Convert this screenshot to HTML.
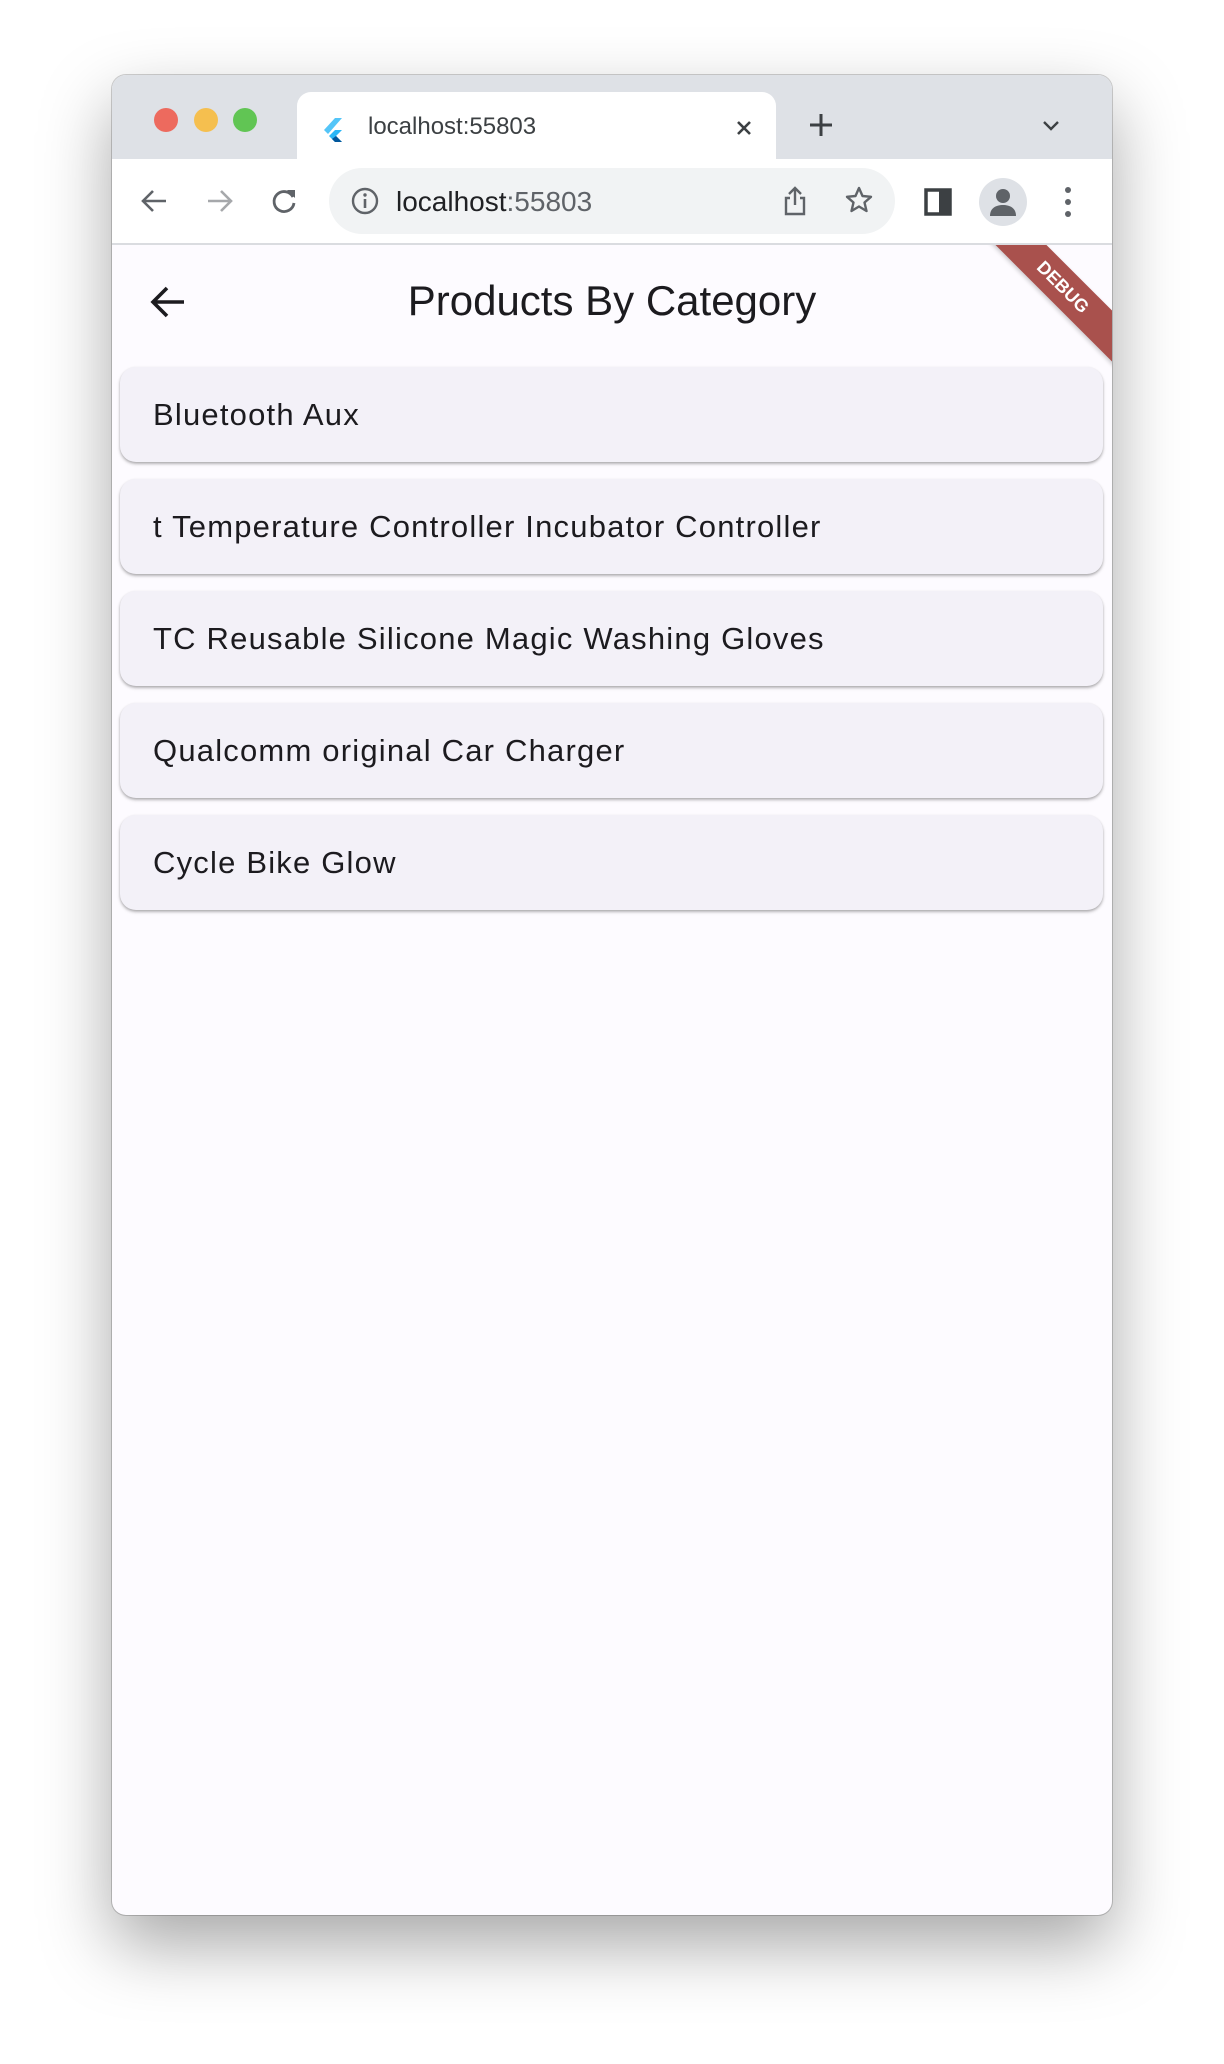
<!DOCTYPE html>
<html><head><meta charset="utf-8"><style>
*{margin:0;padding:0;box-sizing:border-box}
body{width:1224px;height:2064px;background:#fff;position:relative;overflow:hidden;font-family:"Liberation Sans",sans-serif}
.win{position:absolute;left:112px;top:75px;width:1000px;height:1840px;border-radius:14px;background:#fdfbff;overflow:hidden;box-shadow:0 30px 70px rgba(0,0,0,.35),0 0 0 1px rgba(0,0,0,.18)}
.tabs{position:absolute;left:0;top:0;width:100%;height:84px;background:#dee1e6}
.dot{position:absolute;top:33px;width:24px;height:24px;border-radius:50%}
.tab{position:absolute;left:185px;top:17px;width:479px;height:67px;background:#fff;border-radius:14px 14px 0 0}
.tb{position:absolute;left:0;top:84px;width:100%;height:86px;background:#fff;border-bottom:2px solid #dadce0}
.url{position:absolute;left:217px;top:9px;width:566px;height:66px;border-radius:33px;background:#f1f3f4}
.app{position:absolute;left:0;top:170px;width:100%}
.card{position:absolute;left:8px;width:983px;height:95px;background:#f3f1f8;border-radius:16px;box-shadow:0 2px 3px rgba(0,0,0,.25),0 1px 2px rgba(0,0,0,.12)}
.card span{position:absolute;left:33px;top:0;line-height:95px;font-size:31px;letter-spacing:1.2px;color:#1c1b1f}
svg{position:absolute}
</style></head><body>
<div class="win">
 <div class="tabs">
  <div class="dot" style="left:42px;background:#ed6a5e"></div>
  <div class="dot" style="left:82px;background:#f5bf4f"></div>
  <div class="dot" style="left:121px;background:#61c554"></div>
  <div class="tab">
   <svg style="left:26px;top:26px" width="22" height="26" viewBox="0 0 22 26"><path d="M12 0L1 12l4 4L19 0z" fill="#54c5f8"/><path d="M12 12l-6 6 6 6h7l-6-6 6-6z" fill="#29b6f6"/><path d="M9 21l3 3h7l-6-6z" fill="#01579b"/></svg>
   <div style="position:absolute;left:71px;top:21px;font-size:24px;color:#3c4043">localhost:55803</div>
   <svg style="left:437px;top:26px" width="20" height="20" viewBox="0 0 20 20"><path d="M4 4L16 16M16 4L4 16" stroke="#3c4043" stroke-width="2.6"/></svg>
  </div>
  <svg style="left:695px;top:36px" width="28" height="28" viewBox="0 0 28 28"><path d="M14 3V25M3 14H25" stroke="#3c4043" stroke-width="3"/></svg>
  <svg style="left:929px;top:40px" width="20" height="20" viewBox="0 0 20 20"><path d="M3 7l7 7 7-7" stroke="#3c4043" stroke-width="2.4" fill="none"/></svg>
 </div>
 <div class="tb">
  <svg style="left:27px;top:27px" width="30" height="30" viewBox="0 0 30 30"><path d="M27 15H4M14 5L4 15l10 10" stroke="#5f6368" stroke-width="2.6" fill="none"/></svg>
  <svg style="left:93px;top:27px" width="30" height="30" viewBox="0 0 30 30"><path d="M3 15H26M16 5l10 10-10 10" stroke="#a6a8ab" stroke-width="2.6" fill="none"/></svg>
  <svg style="left:157px;top:27px" width="30" height="30" viewBox="0 0 30 30"><path d="M24 11A10 10 0 1 0 25 17" stroke="#5f6368" stroke-width="2.8" fill="none"/><path d="M18 4h8v8z" fill="#5f6368"/></svg>
  <div class="url">
   <svg style="left:21px;top:18px" width="30" height="30" viewBox="0 0 30 30"><circle cx="15" cy="15" r="12" stroke="#5f6368" stroke-width="2.4" fill="none"/><path d="M15 13v9" stroke="#5f6368" stroke-width="2.6"/><circle cx="15" cy="9" r="1.7" fill="#5f6368"/></svg>
   <div style="position:absolute;left:67px;top:18px;font-size:28px;color:#202124">localhost<span style="color:#5f6368">:55803</span></div>
   <svg style="left:453px;top:17px" width="26" height="32" viewBox="0 0 26 32"><path d="M13 3v17M7 9l6-6 6 6M8 13H4v16h18V13h-4" stroke="#5f6368" stroke-width="2.4" fill="none"/></svg>
   <svg style="left:515px;top:17px" width="30" height="30" viewBox="0 0 30 30"><path d="M15 3l3.5 8 8.5.8-6.5 5.7 2 8.5L15 21.5 7.5 26l2-8.5L3 11.8l8.5-.8z" stroke="#5f6368" stroke-width="2.4" fill="none" stroke-linejoin="round"/></svg>
  </div>
  <svg style="left:812px;top:29px" width="28" height="28" viewBox="0 0 28 28"><rect x="2" y="2" width="24" height="24" fill="none" stroke="#3c4043" stroke-width="3.5"/><rect x="15" y="2" width="11" height="24" fill="#3c4043"/></svg>
  <div style="position:absolute;left:867px;top:19px;width:48px;height:48px;border-radius:50%;background:#dee1e6"><svg style="left:10px;top:9px" width="28" height="30" viewBox="0 0 28 30"><circle cx="14" cy="9" r="7" fill="#5f6368"/><path d="M1 29c0-8 6-11 13-11s13 3 13 11z" fill="#5f6368"/></svg></div>
  <svg style="left:951px;top:26px" width="10" height="34" viewBox="0 0 10 34"><circle cx="5" cy="5" r="3" fill="#5f6368"/><circle cx="5" cy="17" r="3" fill="#5f6368"/><circle cx="5" cy="29" r="3" fill="#5f6368"/></svg>
 </div>
 <div class="app">
  <svg style="left:38px;top:39px" width="36" height="36" viewBox="0 0 36 36"><path d="M34 18H4M17 4L3 18l14 14" stroke="#1c1b1f" stroke-width="3.6" fill="none"/></svg>
  <div style="position:absolute;left:0;width:1000px;top:27px;text-align:center;font-size:42px;color:#1c1b1f;line-height:58px">Products By Category</div>
  <div style="position:absolute;right:0;top:0;width:150px;height:150px;overflow:hidden">
   <div style="position:absolute;left:-9px;top:24px;width:220px;height:36px;background:#a9514d;transform:rotate(45deg);transform-origin:center;color:#fff;font-weight:bold;font-size:18px;text-align:center;line-height:36px;box-shadow:0 2px 4px rgba(0,0,0,.2)">DEBUG</div>
  </div>
  <div class="card" style="top:122px"><span>Bluetooth Aux</span></div>
  <div class="card" style="top:234px"><span>t Temperature Controller Incubator Controller</span></div>
  <div class="card" style="top:346px"><span>TC Reusable Silicone Magic Washing Gloves</span></div>
  <div class="card" style="top:458px"><span>Qualcomm original Car Charger</span></div>
  <div class="card" style="top:570px"><span>Cycle Bike Glow</span></div>
 </div>
</div>
</body></html>
